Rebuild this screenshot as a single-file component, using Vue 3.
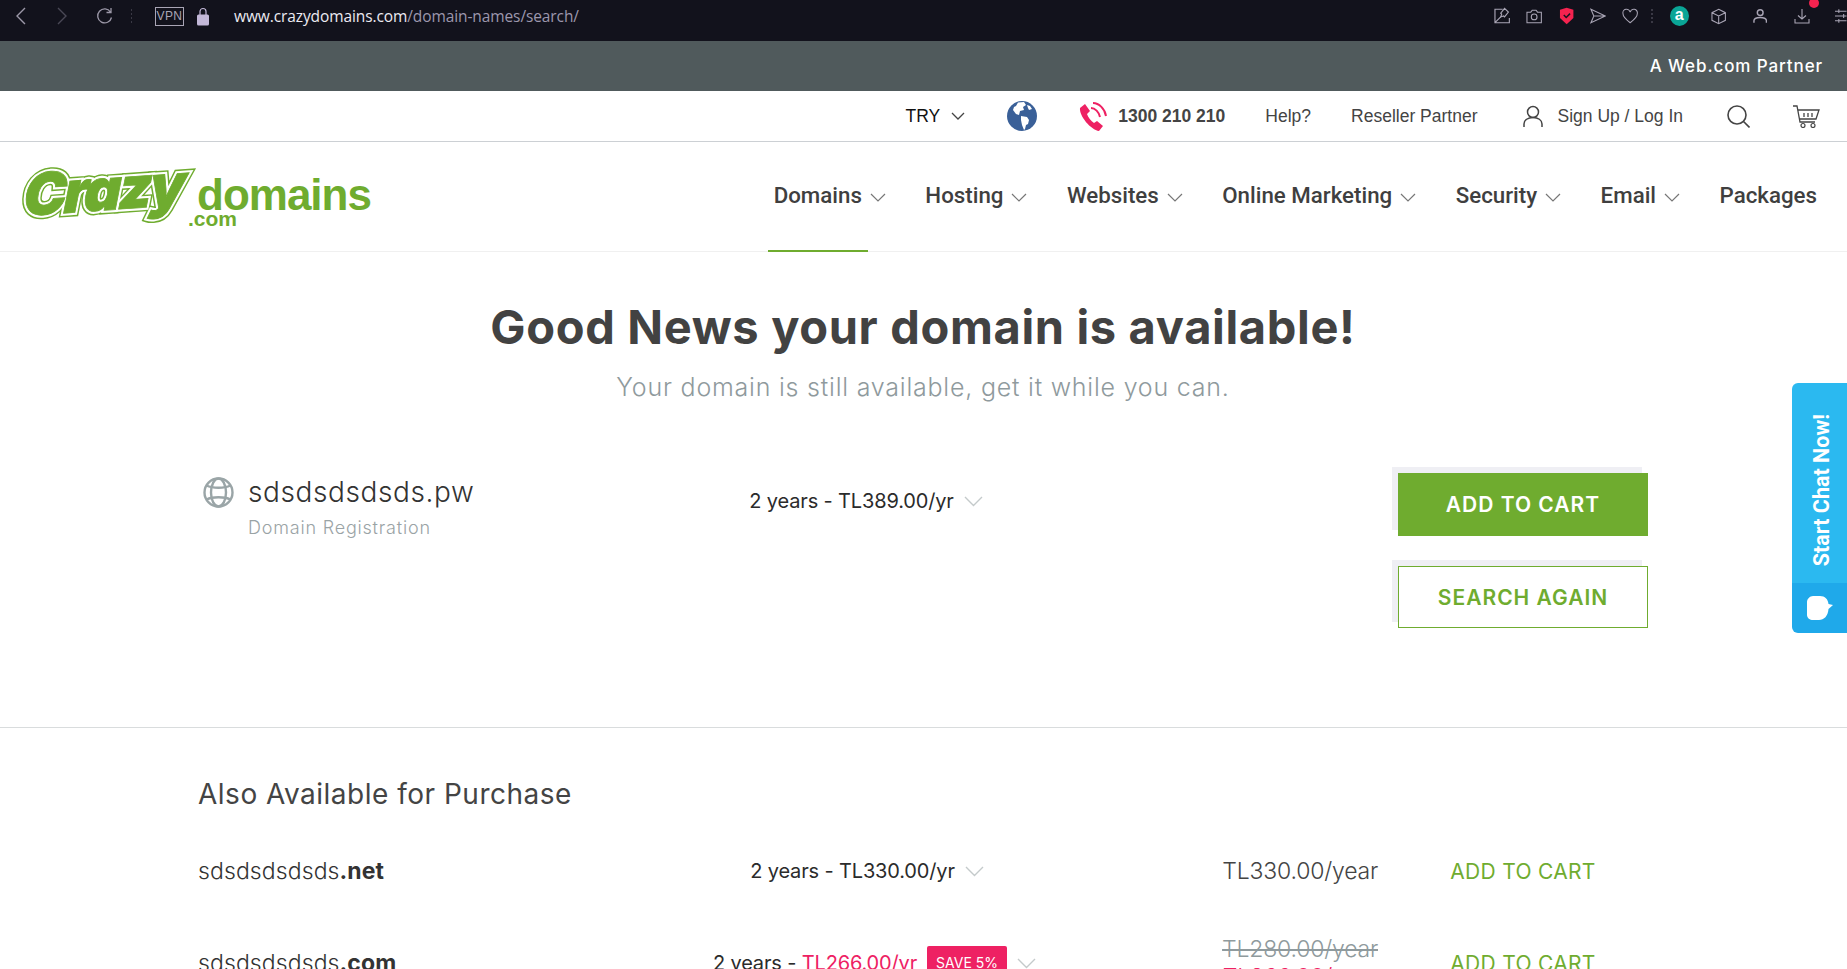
<script setup>
const navItems = ["Domains", "Hosting", "Websites", "Online Marketing", "Security", "Email"];
</script>

<template>
  <div class="page">
    <div class="browser">
      <div class="browser-left">
        <svg class="b-ic" width="12" height="18" viewBox="0 0 12 18"><path d="M10 1 2 9l8 8" fill="none" stroke="#9c98a8" stroke-width="1.4" /></svg>
        <svg class="b-ic fwd" width="12" height="18" viewBox="0 0 12 18"><path d="m2 1 8 8-8 8" fill="none" stroke="#4a4856" stroke-width="1.4" /></svg>
        <svg class="b-ic reload" width="17" height="18" viewBox="0 0 17 18"><path d="M14.500 5A7 7 0 1 0 15.500 10.500M15 1v4.500h-4.500" fill="none" stroke="#9c98a8" stroke-width="1.3" /></svg>
        <span class="dots"></span>
        <span class="vpn">VPN</span>
        <svg class="lock" width="12" height="19" viewBox="0 0 12 19"><path d="M3 8V4.500a3 3 0 0 1 6 0V8" fill="none" stroke="#c3b8d8" stroke-width="1.2" /><rect y="7.500" width="12" height="11" rx="1.500" fill="#c3b8d8" /></svg>
        <span class="url"><b>www.crazydomains.com</b>/domain-names/search/</span>
      </div>
      <div class="browser-right">
        <svg width="17" height="18" viewBox="0 0 17 18"><path d="M9 2H1v14h15v-5M1 16l6-6" fill="none" stroke="#a9a5b5" stroke-width="1.2" /><path d="m11 1 4 4-4 5-1-1-3 1 1-3-1-1z" fill="none" stroke="#a9a5b5" stroke-width="1.2" /></svg>
        <svg width="17" height="16" viewBox="0 0 17 16"><path d="M1 4h4l1.500-2h4L12 4h4v11H1z" fill="none" stroke="#a9a5b5" stroke-width="1.1" /><circle cx="8.500" cy="9" r="3" fill="none" stroke="#a9a5b5" stroke-width="1.1" /></svg>
        <svg width="16" height="18" viewBox="0 0 16 18"><path d="M1 2.500 8 .5l7 2V11l-7 6.500L1 11z" fill="#f5234f" /><path d="m5 8 2.500 2.500L11.500 6.500" fill="none" stroke="#1a1320" stroke-width="1.6" /></svg>
        <svg width="17" height="16" viewBox="0 0 17 16"><path d="m1 1 15 7-15 7 3-7zM4 8h12" fill="none" stroke="#a9a5b5" stroke-width="1.1" /></svg>
        <svg width="17" height="16" viewBox="0 0 17 16"><path d="M8.500 15C3 11 1 8.500 1 5.500A3.800 3.800 0 0 1 8.500 4 3.800 3.800 0 0 1 16 5.500C16 8.500 14 11 8.500 15z" fill="none" stroke="#a9a5b5" stroke-width="1.1" /></svg>
        <span class="dots dots-r"></span>
        <span class="a-badge">a</span>
        <svg class="cube" width="16" height="17" viewBox="0 0 16 17"><path d="M8 1 15 4.500v8L8 16l-7-3.500v-8zM1 4.500 8 8l7-3.500M8 8v8" fill="none" stroke="#a9a5b5" stroke-width="1.1" /></svg>
        <svg class="acct" width="15" height="16" viewBox="0 0 15 16"><circle cx="7.500" cy="4.500" r="3" fill="none" stroke="#a9a5b5" stroke-width="1.500" /><path d="M1 15v-2c0-2 2.500-3.500 6.500-3.500S14 11 14 13v2" fill="none" stroke="#a9a5b5" stroke-width="1.500" /></svg>
        <span class="dl">
          <svg width="16" height="16" viewBox="0 0 16 16"><path d="M8 1v10M4 7.500 8 11l4-3.500M1 11v4h14v-4" fill="none" stroke="#a9a5b5" stroke-width="1.1" /></svg>
          <i class="dl-dot"></i>
        </span>
        <svg class="sliders" width="12" height="16" viewBox="0 0 12 16"><path d="M0 3h12M0 8h12M0 13h12M4 1v4M9 6v4M4 11v4" fill="none" stroke="#a9a5b5" stroke-width="1.1" /></svg>
      </div>
    </div>

    <div class="partner">A Web.com Partner</div>

    <div class="utility">
      <span class="try">TRY</span>
      <svg class="chev-s" width="14" height="8" viewBox="0 0 14 8"><path d="m1 1 6 6 6-6" fill="none" stroke="#444" stroke-width="1.3" /></svg>
      <svg class="world" width="30" height="30" viewBox="0 0 30 30">
        <circle cx="15" cy="15" r="15" fill="#3a6098" />
        <path d="M11 1.500 17 1l2 3-3 2 1 3-4 1-1 4-3-1-3-4 1-3 2-1zM14 15l6 1 2 3-1 4-2 1-1 4-1 1-2-5-1-5zM20 4l3 1 2 3-3 1-1-2z" fill="#fff" />
      </svg>
      <svg class="phone" width="31" height="31" viewBox="0 0 31 31">
        <path d="M2 7 7 3l5 7-3 3c1 3 4 7 7 9l3-2 6 5-4 5C13 29 1 15 2 7z" fill="#ee2163" />
        <path d="M13 7c4 0 8 4 9 9M15 2c6 0 12 6 13 13" fill="none" stroke="#ee2163" stroke-width="2" />
      </svg>
      <b class="tel">1300 210 210</b>
      <a class="ulink help">Help?</a>
      <a class="ulink reseller">Reseller Partner</a>
      <svg class="user" width="20" height="23" viewBox="0 0 20 23"><circle cx="10" cy="7" r="5.500" fill="none" stroke="#444" stroke-width="1.500" /><path d="M1 22v-3c0-4 4-6.500 9-6.500s9 2.500 9 6.500v3" fill="none" stroke="#444" stroke-width="1.500" /></svg>
      <a class="ulink login">Sign Up / Log In</a>
      <svg class="search" width="23" height="23" viewBox="0 0 23 23"><circle cx="10" cy="10" r="9" fill="none" stroke="#444" stroke-width="1.600" /><path d="m16.500 16.500 6 6" stroke="#444" stroke-width="1.600" /></svg>
      <svg class="cart" width="27" height="23" viewBox="0 0 27 23"><path d="M0 1h4l3 16h15M5 5h21l-3 9H7" fill="none" stroke="#444" stroke-width="1.300" /><path d="M11 8v4M15 8v4M19 8v4" stroke="#444" stroke-width="1.300" /><circle cx="10" cy="20.500" r="2" fill="none" stroke="#444" stroke-width="1.200" /><circle cx="20" cy="20.500" r="2" fill="none" stroke="#444" stroke-width="1.200" /></svg>
    </div>

    <header class="nav">
      <svg class="logo" width="360" height="100" viewBox="0 0 360 100">
        <g transform="translate(3 74) rotate(-4) skewX(-6)">
          <text class="crazy" fill="none" stroke="#6fac2f" stroke-width="8">Crazy</text>
          <text class="crazy" fill="none" stroke="#fff" stroke-width="5">Crazy</text>
          <text class="crazy" fill="#6fac2f" stroke="#6fac2f" stroke-width="0.800">Crazy</text>
        </g>
        <text class="domains" x="177" y="68">domains</text>
        <text class="dotcom" x="168" y="84">.com</text>
      </svg>
      <nav class="menu">
        <div v-for="(item, i) in navItems" :key="item" class="menu-item" :class="{ active: i === 0 }">
          <span class="menu-label">{{ item }}</span>
          <svg class="menu-chev" width="16" height="9" viewBox="0 0 16 9"><path d="m1 1 7 7 7-7" fill="none" stroke="#777" stroke-width="1.200" /></svg>
        </div>
        <div class="menu-item"><span class="menu-label">Packages</span></div>
      </nav>
    </header>

    <main class="content">
      <h1>Good News your domain is available!</h1>
      <p class="sub">Your domain is still available, get it while you can.</p>

      <section class="domain">
        <div class="domain-name">
          <svg class="dn-icon" width="31" height="31" viewBox="0 0 31 31"><g fill="none" stroke="#9aa5a7" stroke-width="2.400"><circle cx="15.500" cy="15.500" r="14" /><ellipse cx="15.500" cy="15.500" rx="7.500" ry="14" /><path d="M3.500 8.500c6 3 18 3 24 0M3.500 22.500c6-3 18-3 24 0" /></g></svg>
          <div>
            <div class="dn-title">sdsdsdsdsds.pw</div>
            <div class="dn-type">Domain Registration</div>
          </div>
        </div>
        <div class="select">
          <span>2 years - TL389.00/yr</span>
          <svg class="chev" width="19" height="11" viewBox="0 0 19 11"><path d="m1 1 8.500 8.500L18 1" fill="none" stroke="#c4cacb" stroke-width="1.400" /></svg>
        </div>
        <div class="actions">
          <button class="btn solid">ADD TO CART</button>
          <button class="btn outline">SEARCH AGAIN</button>
        </div>
      </section>

      <section class="also">
        <h2>Also Available for Purchase</h2>
        <div class="row">
          <div class="row-name">sdsdsdsdsds<b>.net</b></div>
          <div class="select">
            <span>2 years - TL330.00/yr</span>
            <svg class="chev" width="19" height="11" viewBox="0 0 19 11"><path d="m1 1 8.500 8.500L18 1" fill="none" stroke="#c4cacb" stroke-width="1.400" /></svg>
          </div>
          <div class="price">TL330.00/year</div>
          <a class="add">ADD TO CART</a>
        </div>
        <div class="row">
          <div class="row-name">sdsdsdsdsds<b>.com</b></div>
          <div class="select sale">
            <span>2 years - <em>TL266.00/yr</em></span>
            <span class="save">SAVE 5%</span>
            <svg class="chev" width="19" height="11" viewBox="0 0 19 11"><path d="m1 1 8.500 8.500L18 1" fill="none" stroke="#c4cacb" stroke-width="1.400" /></svg>
          </div>
          <div class="price">
            <s>TL280.00/year</s>
            <em>TL266.00/year</em>
          </div>
          <a class="add">ADD TO CART</a>
        </div>
      </section>
    </main>

    <aside class="chat">
      <div class="chat-top"><span>Start Chat Now!</span></div>
      <div class="chat-bottom">
        <svg width="26" height="24" viewBox="0 0 26 24"><path d="M6 0h7c5 0 8 3 8.500 8L26 9l-4.500 4C21 20 17 24 12 24H6c-3 0-6-2-6-5V6c0-3 3-6 6-6z" fill="#fff" /></svg>
      </div>
    </aside>
  </div>
</template>

<style>
html,
body {
  margin: 0;
  overflow: hidden;
}
</style>

<style scoped>
.page {
  position: relative;
  width: 1847px;
  height: 969px;
  overflow: hidden;
  background: #fff;
  font-family: "Inter", "Liberation Sans", sans-serif;
  color: #444;
}

.browser {
  height: 41px;
  padding-bottom: 9px;
  box-sizing: border-box;
  background: #12121c;
  display: flex;
  justify-content: space-between;
  align-items: center;
}
.browser-left {
  display: flex;
  align-items: center;
  padding-left: 15px;
}
.fwd {
  margin-left: 29px;
}
.reload {
  margin-left: 28px;
}
.dots {
  width: 1px;
  height: 14px;
  margin-left: 18px;
  background: repeating-linear-gradient(#3a3945 0 2px, transparent 2px 4px);
}
.vpn {
  margin-left: 23px;
  width: 27px;
  height: 17px;
  border: 1px solid #a9a5b5;
  color: #a9a5b5;
  font: 12px/17px "Liberation Sans", sans-serif;
  text-align: center;
  letter-spacing: 0.4px;
}
.lock {
  margin-left: 13px;
}
.url {
  margin-left: 25px;
  font: 15.500px "Open Sans", sans-serif;
  color: #9d97ad;
  letter-spacing: -0.1px;
}
.url b {
  font-weight: 400;
  color: #eceaf2;
}
.browser-right {
  display: flex;
  align-items: center;
  gap: 16px;
  width: 353px;
}
.dots-r {
  margin: 0 1px 0 -4px;
  width: 2px;
}
.a-badge {
  width: 20px;
  height: 20px;
  border-radius: 50%;
  background: #0aa596;
  color: #fff;
  font: 700 16px/18px "Liberation Sans", sans-serif;
  text-align: center;
}
.cube {
  margin-left: 6px;
}
.acct {
  margin-left: 11px;
}
.dl {
  position: relative;
  display: flex;
  margin-left: 11px;
}
.dl-dot {
  position: absolute;
  top: -10px;
  right: -9px;
  width: 10px;
  height: 10px;
  border-radius: 50%;
  background: #f5234f;
}
.sliders {
  margin-left: 9px;
}

.partner {
  height: 50px;
  background: #505a5c;
  color: #fff;
  font-size: 17px;
  font-weight: 500;
  letter-spacing: 0.9px;
  line-height: 50px;
  text-align: right;
  padding-right: 24px;
}

.utility {
  height: 51px;
  box-sizing: border-box;
  border-bottom: 1px solid #ccd0d4;
  display: flex;
  align-items: center;
  justify-content: flex-end;
  padding-right: 27px;
  font: 17.500px "Liberation Sans", sans-serif;
  color: #444;
}
.try {
  color: #111;
}
.chev-s {
  margin-left: 11px;
}
.world {
  margin-left: 42px;
}
.phone {
  margin-left: 41px;
}
.tel {
  margin-left: 9px;
}
.help {
  margin-left: 40px;
}
.reseller {
  margin-left: 40px;
}
.user {
  margin-left: 45px;
}
.login {
  margin-left: 15px;
}
.search {
  margin-left: 44px;
}
.cart {
  margin-left: 43px;
}

.nav {
  height: 110px;
  border-bottom: 1px solid #f0f0f0;
  display: flex;
  align-items: flex-start;
  justify-content: space-between;
  padding: 0 30px 0 20px;
  box-sizing: border-box;
}
.crazy {
  font: italic 900 58px "Inter", sans-serif;
  letter-spacing: -3px;
}
.domains {
  font: 700 44px "Liberation Sans", sans-serif;
  letter-spacing: -1px;
  fill: #6fac2f;
}
.dotcom {
  font: 700 21px "Liberation Sans", sans-serif;
  fill: #6fac2f;
}
.menu {
  display: flex;
  height: 109px;
}
.menu-item {
  display: flex;
  align-items: center;
  gap: 8px;
  margin-left: 39.500px;
  height: 109px;
  position: relative;
  padding-bottom: 4px;
  box-sizing: border-box;
  font: 500 22.300px "Roboto", sans-serif;
  color: #3f3f3f;
}
.menu-chev {
  margin-top: 5px;
}
.menu-item.active::after {
  content: "";
  position: absolute;
  left: -6px;
  bottom: -1px;
  width: 100px;
  height: 2px;
  background: #6fac2f;
}

.content {
  padding: 0 199px 0 198px;
}
h1 {
  margin: 0;
  padding-top: 43px;
  font-size: 47px;
  line-height: 64px;
  font-weight: 700;
  letter-spacing: 0.650px;
  text-align: center;
  color: #424242;
}
.sub {
  margin: 11px 0 0;
  font-size: 25px;
  line-height: 34px;
  font-weight: 300;
  letter-spacing: 0.780px;
  text-align: center;
  color: #8f9a9d;
}

.domain {
  display: grid;
  grid-template-columns: 498px 344px 1fr 250px;
  margin-top: 65px;
  height: 258px;
  box-sizing: border-box;
}
.domain-name {
  display: flex;
  gap: 14px;
  padding: 5px 0 0 5px;
  align-items: flex-start;
}
.dn-icon {
  margin-top: 3px;
}
.dn-title {
  font-size: 28px;
  line-height: 36px;
  font-weight: 300;
  letter-spacing: 0.600px;
  color: #333;
}
.dn-type {
  font-size: 18px;
  line-height: 26px;
  margin-top: 5px;
  font-weight: 300;
  letter-spacing: 0.800px;
  color: #9aa3a5;
}
.select {
  display: flex;
  align-items: center;
  justify-content: center;
  gap: 10px;
  padding-right: 6px;
  font-size: 20px;
  letter-spacing: -0.150px;
  color: #2b2b2b;
}
.select.sale {
  padding-right: 0;
  padding-left: 9px;
}
.domain .select {
  height: 36px;
  margin-top: 14px;
  padding-right: 4px;
}
.select em {
  font-style: normal;
  color: #ee2163;
}
.actions {
  grid-column: 4;
  display: flex;
  flex-direction: column;
  gap: 30px;
  padding-top: 4px;
}
.btn {
  display: block;
  width: 250px;
  font: 600 21px "Inter", sans-serif;
  letter-spacing: 1px;
  box-shadow: -6px -6px 0 #efeff4;
}
.solid {
  height: 63px;
  background: #6fac2f;
  color: #fff;
  border: none;
}
.outline {
  height: 62px;
  background: #fff;
  color: #6fac2f;
  border: 1.500px solid #6fac2f;
}

.also {
  border-top: 1px solid #d9dcdd;
  margin: 0 -199px 0 -198px;
  padding: 0 199px 0 198px;
}
h2 {
  margin: 0 0 11px;
  padding-top: 46px;
  font-size: 28px;
  line-height: 40px;
  font-weight: 400;
  letter-spacing: 0.500px;
  color: #444;
}
.row {
  display: grid;
  grid-template-columns: 502px 340px 1fr 250px;
  align-items: center;
  height: 92px;
}
.row-name {
  font-size: 23px;
  font-weight: 300;
  letter-spacing: 0.100px;
  color: #333;
}
.row-name b {
  font-weight: 700;
}
.price {
  text-align: right;
  padding-right: 20px;
  font-size: 23px;
  font-weight: 300;
  letter-spacing: -0.200px;
  color: #444;
}
.price s {
  display: block;
  color: #8f9a9d;
}
.price em {
  display: block;
  font-style: normal;
  color: #ee2163;
}
.add {
  text-align: center;
  font-size: 21px;
  letter-spacing: 0.300px;
  color: #6fac2f;
}
.save {
  background: #ee2163;
  color: #fff;
  font-size: 14px;
  line-height: 34px;
  padding: 0 9px;
  border-radius: 2px;
  letter-spacing: 0;
}

.chat {
  position: absolute;
  top: 383px;
  right: 0;
  width: 55px;
  height: 250px;
  border-radius: 6px 0 0 6px;
  overflow: hidden;
}
.chat-top {
  height: 200px;
  background: #2bb9f0;
  display: flex;
  align-items: center;
  justify-content: center;
}
.chat-top span {
  writing-mode: vertical-rl;
  transform: rotate(180deg);
  color: #fff;
  font: 700 21.500px "Roboto", sans-serif;
  white-space: nowrap;
  margin: 15px 0 0 3px;
}
.chat-bottom {
  height: 50px;
  background: #1fa9ea;
  display: flex;
  align-items: center;
  justify-content: center;
}
</style>
